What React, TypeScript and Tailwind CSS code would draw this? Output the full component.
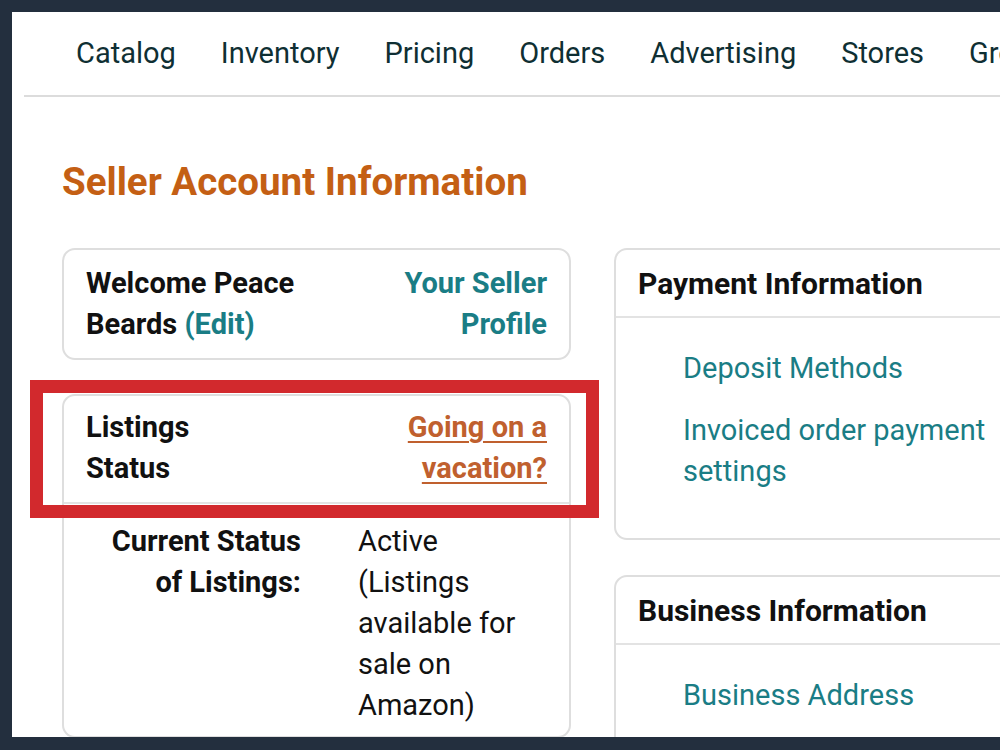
import React from "react";

const navItems = ["Catalog", "Inventory", "Pricing", "Orders", "Advertising", "Stores", "Growth"];

export default function App() {
  return (
    <div
      className="w-[1000px] h-[750px] bg-[#232f3e] pt-[12px] pl-[12px] overflow-hidden"
      style={{ fontFamily: "Roboto, 'Noto Sans', sans-serif" }}
    >
      <div className="relative bg-white w-[988px] h-[725px] overflow-hidden">
        {/* Top navigation */}
        <nav className="ml-[12px] h-[85px] border-b-2 border-[#dcdcdc] flex items-center pl-[52px] gap-[45px] whitespace-nowrap text-[29px] text-[#0f2f33]">
          {navItems.map((n) => (
            <span key={n}>{n}</span>
          ))}
        </nav>

        <div className="pl-[50px]">
          <h1 className="mt-[62px] text-[38.5px] leading-[46px] font-bold text-[#c45f14] whitespace-nowrap">
            Seller Account Information
          </h1>

          <div className="mt-[43px] flex gap-[43px] items-start">
            {/* Left column */}
            <div className="w-[509px] shrink-0 flex flex-col gap-[34px]">
              <div className="rounded-[13px] border-2 border-[#dedede] px-[22px] py-[13px] flex justify-between text-[29px] leading-[41px] font-bold">
                <div className="w-[240px] text-[#111111]">
                  Welcome Peace Beards <span className="text-[#1a7d85]">(Edit)</span>
                </div>
                <div className="w-[170px] text-right text-[#1a7d85]">Your Seller Profile</div>
              </div>

              <div className="rounded-[13px] border-2 border-[#dedede] text-[29px] leading-[41px]">
                <div className="px-[22px] pt-[11px] pb-[13px] flex justify-between font-bold border-b-2 border-[#e3e3e3]">
                  <div className="w-[140px] text-[#111111]">Listings Status</div>
                  <div className="w-[170px] text-right text-[#c0602e] underline underline-offset-[4px] decoration-2">
                    Going on a vacation?
                  </div>
                </div>
                <div className="px-[22px] pt-[17px] pb-[10px] grid grid-cols-[215px_1fr] gap-x-[57px]">
                  <div className="text-right font-bold text-[#111111]">Current Status of Listings:</div>
                  <div className="text-[#111111]">Active (Listings available for sale on Amazon)</div>
                </div>
              </div>
            </div>

            {/* Right column */}
            <div className="w-[420px] shrink-0 flex flex-col gap-[35px] text-[29px] leading-[41px]">
              <div className="rounded-[13px] border-2 border-[#dedede]">
                <div className="pl-[22px] pt-[13px] pb-[12px] text-[30px] font-bold text-[#111111] border-b-2 border-[#e3e3e3] whitespace-nowrap">
                  Payment Information
                </div>
                <div className="pl-[67px] pr-[23px] pt-[30px] pb-[46px] flex flex-col gap-[21px] text-[#1a7d85]">
                  <span>Deposit Methods</span>
                  <span>Invoiced order payment settings</span>
                </div>
              </div>

              <div className="rounded-[13px] border-2 border-[#dedede]">
                <div className="pl-[22px] pt-[13px] pb-[12px] text-[30px] font-bold text-[#111111] border-b-2 border-[#e3e3e3] whitespace-nowrap">
                  Business Information
                </div>
                <div className="pl-[67px] pr-[23px] pt-[30px] pb-[47px] flex flex-col gap-[21px] text-[#1a7d85]">
                  <span>Business Address</span>
                  <span>Legal Entity</span>
                </div>
              </div>
            </div>
          </div>
        </div>

        {/* Red highlight box */}
        <div className="absolute left-[18px] top-[368px] w-[569px] h-[138px] border-[13px] border-[#d2292d] pointer-events-none" />
      </div>
    </div>
  );
}
